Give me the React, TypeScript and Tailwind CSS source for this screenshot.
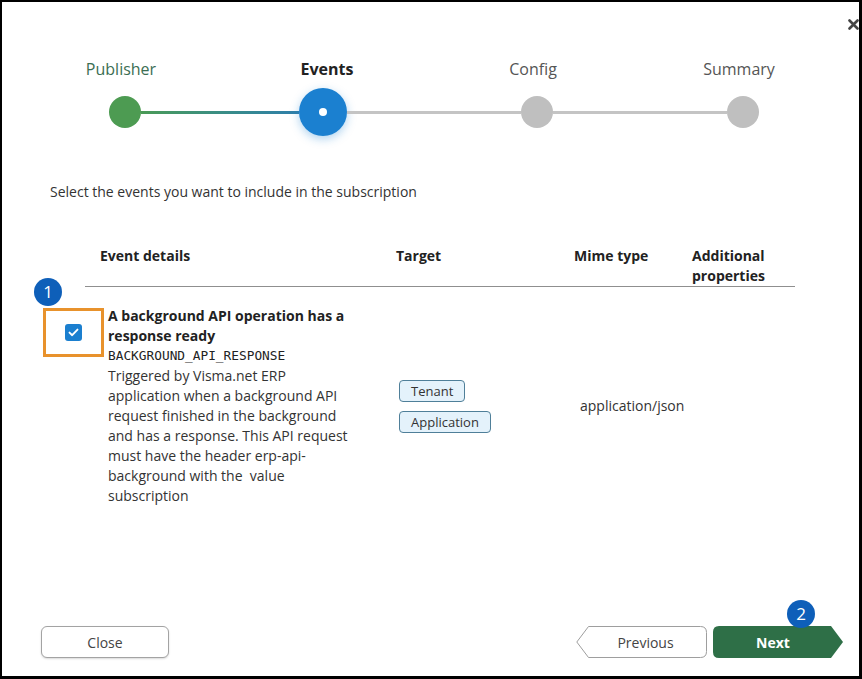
import React from "react"

const font = { fontFamily: '"Open Sans", "Noto Sans", sans-serif' }

function StepLabels() {
    const labels = [
        { text: "Publisher", cls: "text-[#3b6e53]" },
        { text: "Events", cls: "font-bold text-[#222]" },
        { text: "Config", cls: "text-[#555]" },
        { text: "Summary", cls: "text-[#555]" },
    ]
    return (
        <div className="flex flex-row ml-[16px] mt-[56px]">
            {labels.map((l) => (
                <div key={l.text} className={`w-[206px] text-center text-[16px] leading-[22px] ${l.cls}`}>
                    {l.text}
                </div>
            ))}
        </div>
    )
}

function StepTrack() {
    return (
        <div className="flex flex-row items-center h-[48px] mt-[8px] ml-[107px]">
            <div className="w-[32px] h-[32px] rounded-full bg-[#4d9b52]" />
            <div className="w-[158px] h-[3px] bg-linear-to-r from-[#4a9a55] to-[#2f7eaa]" />
            <div className="w-[48px] h-[48px] rounded-full bg-[#1b80d0] flex items-center justify-center shadow-[0_3px_10px_rgba(27,128,208,0.35)]">
                <div className="w-[8px] h-[8px] rounded-full bg-white" />
            </div>
            <div className="w-[174px] h-[3px] bg-[#c4c4c4]" />
            <div className="w-[32px] h-[32px] rounded-full bg-[#bfbfbf]" />
            <div className="w-[174px] h-[3px] bg-[#c4c4c4]" />
            <div className="w-[32px] h-[32px] rounded-full bg-[#bfbfbf]" />
        </div>
    )
}

function Badge({ n }: { n: number }) {
    return (
        <div className="w-[28px] h-[28px] rounded-full bg-[#0e5fb9] text-white text-[17px] leading-[28px] text-center">
            {n}
        </div>
    )
}

function Tag({ children }: { children: React.ReactNode }) {
    return (
        <div className="inline-block border border-[#4f7f99] bg-[#e4f2fb] rounded-[4px] px-[11px] text-[13px] leading-[20px] text-[#333]">
            {children}
        </div>
    )
}

export default function App() {
    return (
        <div
            style={font}
            className="relative w-[862px] h-[679px] bg-white border-t-2 border-l-2 border-r-[3px] border-b-[3px] border-black overflow-hidden flex flex-col text-[#333]"
        >
            <svg className="absolute left-[846px] top-[17px]" width="11" height="11" viewBox="0 0 11 11">
                <path d="M1.5 1.5 L9.5 9.5 M9.5 1.5 L1.5 9.5" stroke="#444" strokeWidth="2.6" strokeLinecap="round" />
            </svg>

            <StepLabels />
            <StepTrack />

            <div className="ml-[48px] mt-[46px] text-[14px] leading-[20px] text-[#333]">
                Select the events you want to include in the subscription
            </div>

            {/* table header */}
            <div className="ml-[83px] mt-[44px] w-[710px] flex flex-row border-b border-[#8f8f8f] h-[41px] text-[14px] leading-[20px] font-bold text-[#222]">
                <div className="w-[311px] pl-[15px]">Event details</div>
                <div className="w-[178px]">Target</div>
                <div className="w-[118px]">Mime type</div>
                <div className="w-[90px]">Additional properties</div>
            </div>

            {/* event row */}
            <div className="flex flex-row ml-[41px] mt-[19px]">
                <div className="w-[61px] h-[49px] mt-[2px] border-[3px] border-[#e8922c] flex items-center justify-center">
                    <div className="w-[17px] h-[17px] rounded-[3px] bg-[#1b7fcf] flex items-center justify-center">
                        <svg width="11" height="9" viewBox="0 0 11 9">
                            <path d="M1.5 4.6 L4.2 7.2 L9.5 1.6" stroke="white" strokeWidth="1.9" fill="none" strokeLinecap="round" strokeLinejoin="round" />
                        </svg>
                    </div>
                </div>
                <div className="ml-[4px] w-[248px] text-[14px] leading-[20px]">
                    <div className="font-bold text-[#222]">A background API operation has a response ready</div>
                    <div className="text-[12.8px] text-[#222]" style={{ fontFamily: '"DejaVu Sans Mono", monospace' }}>
                        BACKGROUND_API_RESPONSE
                    </div>
                    <div className="text-[#333] whitespace-pre-wrap">
                        {"Triggered by Visma.net ERP application when a background API request finished in the background and has a response. This API request must have the header erp-api-background with the  value subscription"}
                    </div>
                </div>
                <div className="ml-[43px] w-[181px] flex flex-col justify-center items-start gap-[9px]">
                    <Tag>Tenant</Tag>
                    <Tag>Application</Tag>
                </div>
                <div className="flex items-center text-[14px] leading-[20px] text-[#333]">application/json</div>
            </div>

            <div className="flex-1" />

            {/* footer */}
            <div className="flex flex-row items-center mb-[18px] ml-[39px] h-[32px]">
                <button className="w-[128px] h-[32px] rounded-[6px] border border-[#a3a3a3] bg-white text-[14px] text-[#444] shadow-[0_1px_2px_rgba(0,0,0,0.15)]">
                    Close
                </button>
                <div className="flex-1" />
                <button className="relative w-[131px] h-[32px] text-[14px] text-[#444] pl-[8px]">
                    <svg className="absolute inset-0" width="131" height="32" viewBox="0 0 131 32">
                        <path d="M12.5 0.5 H124.5 Q130.5 0.5 130.5 6.5 V25.5 Q130.5 31.5 124.5 31.5 H12.5 L0.8 16 Z" fill="white" stroke="#9e9e9e" />
                    </svg>
                    <span className="relative">Previous</span>
                </button>
                <button className="relative ml-[6px] mr-[16px] w-[130px] h-[32px] text-[14px] font-bold text-white pr-[10px]">
                    <svg className="absolute inset-0" width="130" height="32" viewBox="0 0 130 32">
                        <path d="M6 0 H118 L130 16 L118 32 H6 Q0 32 0 26 V6 Q0 0 6 0 Z" fill="#2e6f47" />
                    </svg>
                    <span className="relative">Next</span>
                </button>
            </div>

            <div className="absolute left-[32px] top-[276px]">
                <Badge n={1} />
            </div>
            <div className="absolute left-[785px] top-[598px]">
                <Badge n={2} />
            </div>
        </div>
    )
}
